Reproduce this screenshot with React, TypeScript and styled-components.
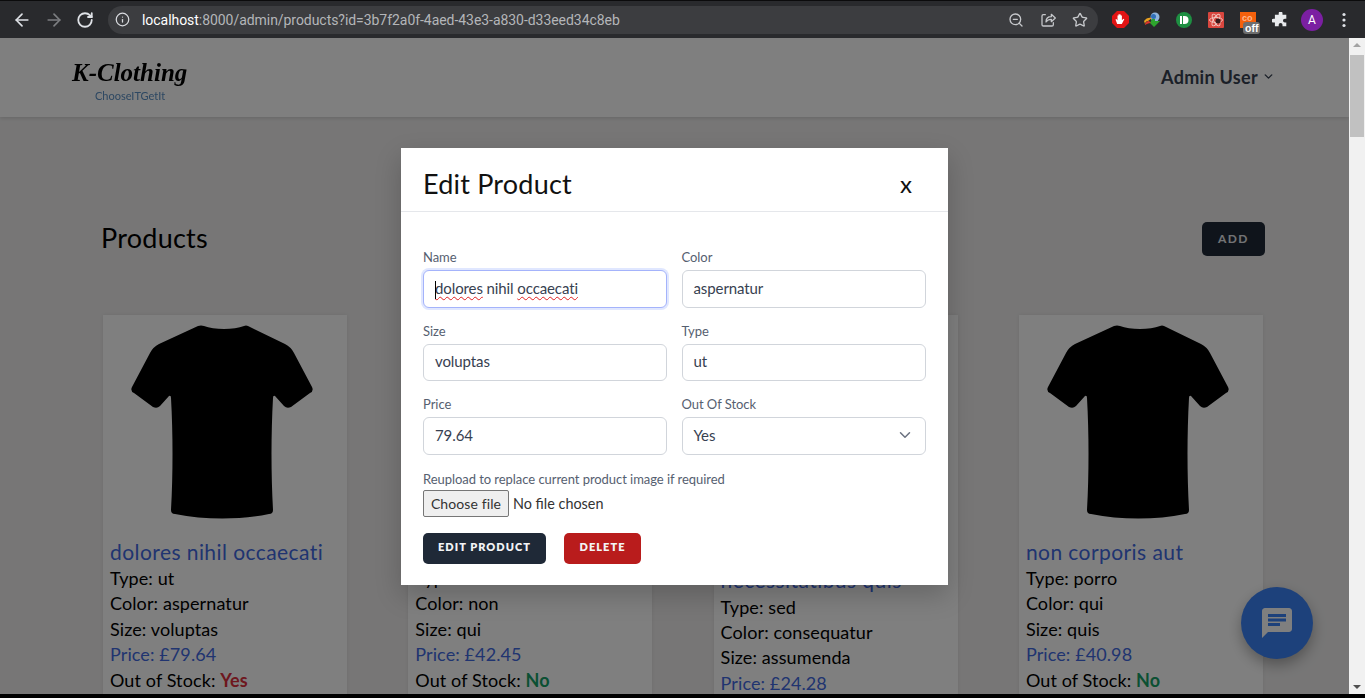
import React from "react";
import styled, { createGlobalStyle } from "styled-components";
import { ArrowLeft, ArrowRight, RotateCw, Info, ZoomOut, Star, ChevronDown } from "lucide-react";

const Global = createGlobalStyle`
  html, body { margin: 0; padding: 0; height: 100%; overflow: hidden; }
  body { font-family: Lato, "Liberation Sans", sans-serif; background: #000; }
  * { box-sizing: border-box; }
`;

const Shell = styled.div`
  height: 698px; display: flex; flex-direction: column; overflow: hidden; background: #000;
`;
const Toolbar = styled.div`
  height: 38px; flex: none; background: #292a2d; border-top: 1px solid #0b0b0c;
  display: flex; align-items: center; padding: 0 0 0 12px; color: #dee1e6;
`;
const NavGroup = styled.div`
  display: flex; gap: 12px; align-items: center; width: 96px; flex: none;
`;
const Omnibox = styled.div`
  width: 990px; flex: none; height: 28px; border-radius: 14px; background: #3c3d40;
  display: flex; align-items: center; padding: 0 10px 0 7px; gap: 12px;
`;
const Url = styled.div`
  flex: 1; font: 14px "Roboto", "Liberation Sans", sans-serif; letter-spacing: -.05px; color: #b4b6b9; white-space: nowrap;
  b { color: #fff; font-weight: 400; }
`;
const OmniActions = styled.div`
  display: flex; gap: 16px; align-items: center; color: #c6c8cb;
`;
const Exts = styled.div`
  display: flex; align-items: center; margin-left: 6px; gap: 0;
`;
const ExtSlot = styled.div`
  width: 32px; height: 24px; display: flex; align-items: center; justify-content: center; position: relative; flex: none;
`;
const OffBadge = styled.span`
  position: absolute; left: 11px; top: 14px; background: #6e6e6e; color: #fff; border-radius: 3px;
  font: 700 10.5px/12px "Liberation Sans", sans-serif; padding: 0 2px;
`;
const CoMark = styled.text`
  font: 700 9px "Liberation Sans", sans-serif; fill: #ffb78c;
`;
const Avatar = styled.div`
  width: 22px; height: 22px; border-radius: 50%; background: #7b1fa2; color: #fff;
  font: 12px/22px "Roboto", sans-serif; text-align: center;
`;
const Viewport = styled.div`
  height: 656px; flex: none; display: flex; position: relative; overflow: hidden;
`;
const Page = styled.div`
  width: 1349px; flex: none; background: #eeeded; position: relative; overflow: hidden;
`;
const Header = styled.header`
  height: 79px; background: #fff; box-shadow: 0 1px 4px rgba(0,0,0,.15);
  display: flex; align-items: center; justify-content: space-between; padding: 0 74px 0 72px;
`;
const Logo = styled.div`
  display: flex; flex-direction: column; width: 114px; margin-top: 5px; filter: blur(.35px);
`;
const LogoMark = styled.div`
  font: italic 700 25px/30px "Liberation Serif", serif; letter-spacing: 0; color: #000; white-space: nowrap;
`;
const LogoTag = styled.div`
  font: 11px/12px Lato, sans-serif; color: #5b8fc4; margin: 2px 0 0 23px;
`;
const UserMenu = styled.div`
  display: flex; align-items: center; gap: 4px; font-size: 18px; font-weight: 700; color: #374151;
  letter-spacing: .3px; margin-top: -2px;
`;
const TitleRow = styled.div`
  display: flex; justify-content: space-between; align-items: flex-start;
  padding: 104px 84px 0 101px; height: 160px;
`;
const PageTitle = styled.h1`
  margin: 0; font-size: 27px; line-height: 33px; font-weight: 400; color: #000; letter-spacing: .25px;
`;
const AddButton = styled.button`
  width: 63px; height: 34px; border: 0; border-radius: 5px; background: #1f2937; color: #e5e7eb;
  font: 700 12px Lato, sans-serif; letter-spacing: 1.4px; margin-top: 1px; padding: 0 0 2px;
`;
const Grid = styled.div`
  display: grid; grid-template-columns: repeat(4, 244px); column-gap: 61.3px; padding: 38px 0 0 103px; align-items: start;
`;
const Card = styled.article`
  background: #fff; box-shadow: 0 0 4px rgba(0,0,0,.08); padding: 9px 7px 0; height: 430px;
`;
const ShirtBox = styled.div`
  height: 195px; margin: 0 0 18.5px 20px;
`;
const CardTitle = styled.div`
  font-size: 21px; line-height: 28.5px; color: #4169e1; letter-spacing: .43px;
`;
const Line = styled.div<{ $blue?: boolean }>`
  font-size: 18px; line-height: 25.4px; color: ${p => (p.$blue ? "#4169e1" : "#000")}; letter-spacing: .1px;
`;
const Stock = styled.b<{ $no?: boolean }>`
  color: ${p => (p.$no ? "#16a066" : "#dc2f3c")}; font-weight: 700;
`;
const Backdrop = styled.div`
  position: absolute; inset: 0; background: rgba(0,0,0,.5);
`;
const Modal = styled.div`
  position: absolute; left: 401px; top: 110px; width: 547px; height: 437px; background: #fff;
  box-shadow: 0 10px 25px rgba(0,0,0,.2); color: #000;
`;
const ModalHead = styled.div`
  height: 64px; border-bottom: 1px solid #e5e7eb; padding: 7px 36px 0 22px;
  display: flex; justify-content: space-between; align-items: center;
`;
const ModalTitle = styled.h2`
  margin: 0; font-size: 27px; font-weight: 400; letter-spacing: .2px; color: #111;
`;
const CloseX = styled.span`
  font-size: 24px; line-height: 24px; color: #111; margin-top: 2px;
`;
const Form = styled.div`
  padding: 36px 22px 0;
`;
const FieldGrid = styled.div`
  display: grid; grid-template-columns: 244px 244.5px; column-gap: 14.5px; row-gap: 14.2px;
`;
const FieldWrap = styled.div``;
const Label = styled.div`
  font-size: 13px; line-height: 18px; color: #566070; letter-spacing: -.05px; margin-bottom: 4px;
`;
const Field = styled.div<{ $focus?: boolean }>`
  height: 37.5px; border: 1px solid ${p => (p.$focus ? "#a4b3fb" : "#d1d5db")}; border-radius: 6px; background: #fff;
  padding: 0 11px 2px; display: flex; align-items: center; justify-content: space-between;
  font-size: 15px; color: #374151; letter-spacing: -.1px; position: relative;
  ${p => p.$focus && "box-shadow: 0 0 0 2px #e0e7ff;"}
`;
const Caret = styled.i`
  position: absolute; left: 11px; top: 10px; height: 18px; width: 1px; background: #000;
`;
const Misspelt = styled.span`
  text-decoration: underline wavy #e02020 1px; text-underline-offset: 2px;
`;
const FileLabel = styled(Label)`
  margin: 15px 0 2.5px;
`;
const FileRow = styled.div`
  display: flex; align-items: center; gap: 4px; height: 27px;
`;
const FileButton = styled.button`
  width: 86px; height: 27px; padding: 0 0 1px; background: #efefef; border: 1px solid #767676; border-radius: 2px;
  font: 14px Lato, sans-serif; letter-spacing: .1px; color: #333;
`;
const FileHint = styled.span`
  font-size: 14.4px; color: #333;
`;
const Actions = styled.div`
  display: flex; gap: 18px; margin-top: 15.5px;
`;
const ActionBtn = styled.button<{ $danger?: boolean }>`
  height: 31px; width: ${p => (p.$danger ? "77px" : "123px")}; border: 0; border-radius: 5px; padding: 0 0 3px;
  background: ${p => (p.$danger ? "#b91c1c" : "#1f2937")}; color: #f3f4f6;
  font: 800 11px Lato, sans-serif; letter-spacing: 1.05px;
`;
const ChatFab = styled.div`
  position: absolute; left: 1241px; top: 549px; width: 72px; height: 72px; border-radius: 50%;
  background: #3b82f6; box-shadow: 0 6px 14px rgba(0,0,0,.3);
  display: flex; align-items: center; justify-content: center;
`;
const Scrollbar = styled.div`
  width: 16px; flex: none; background: #f1f1f1; display: flex; flex-direction: column; align-items: center; justify-content: space-between; padding: 5px 0; position: relative;
`;
const Thumb = styled.div`
  position: absolute; left: 1px; right: 1px; top: 17px; height: 82px; background: #c1c1c1;
`;
const Arrow = styled.div<{ $down?: boolean }>`
  width: 0; height: 0; border-left: 4px solid transparent; border-right: 4px solid transparent;
  ${p => (p.$down ? "border-top: 4px solid #505050;" : "border-bottom: 4px solid #a3a3a3;")}
`;

const Shirt = () => (
  <svg width="184" height="196" viewBox="0 0 184 196" fill="#000">
    <path d="M74 2 C 84 6 104 6 114 2 Q 116 1 118 2 L 155 20 Q 161 23 164 29 L 182 63 Q 184 67 180 69 L 161 83 Q 157 85 154 82 L 145 72 Q 143 71 143 74 C 141 110 141 150 143 186 Q 143 190 139 190 C 110 196 75 196 45 190 Q 41 190 41 186 C 43 150 43 110 41 74 Q 41 71 39 72 L 30 82 Q 27 85 23 83 L 4 69 Q 0 67 2 63 L 20 29 Q 23 23 29 20 L 68 2 Q 71 1 74 2 Z" />
  </svg>
);

const ShareIcon = () => (
  <svg width="16" height="16" viewBox="0 0 24 24" fill="none" stroke="currentColor" strokeWidth="1.9" strokeLinejoin="round" strokeLinecap="round">
    <path d="M8 4H5a2 2 0 0 0-2 2v13a2 2 0 0 0 2 2h13a2 2 0 0 0 2-2v-3" />
    <path d="M9 15c0-5 3.500-8 8-8V3.500L23 9l-6 5.500V11c-3.500 0-6 1-8 4z" />
  </svg>
);

const cards = [
  { t: "dolores nihil occaecati", type: "ut", color: "aspernatur", size: "voluptas", price: "79.64", no: false },
  { t: "sit et dolorem", type: "ut", color: "non", size: "qui", price: "42.45", no: true },
  { t: "aut ipsam repellat necessitatibus quis", type: "sed", color: "consequatur", size: "assumenda", price: "24.28", no: true },
  { t: "non corporis aut", type: "porro", color: "qui", size: "quis", price: "40.98", no: true },
];

export default function App() {
  return (
    <Shell>
      <Global />
      <Toolbar>
        <NavGroup>
          <ArrowLeft size={20} strokeWidth={2} />
          <ArrowRight size={20} strokeWidth={2} color="#7c7e81" />
          <RotateCw size={18} strokeWidth={2.4} />
        </NavGroup>
        <Omnibox>
          <Info size={15} color="#dadce0" />
          <Url><b>localhost</b>:8000/admin/products?id=3b7f2a0f-4aed-43e3-a830-d33eed34c8eb</Url>
          <OmniActions>
            <ZoomOut size={16} />
            <ShareIcon />
            <Star size={16} />
          </OmniActions>
        </Omnibox>
        <Exts>
          <ExtSlot>
            <svg width="17" height="17" viewBox="0 0 17 17"><path d="M5 0h7l5 5v7l-5 5H5l-5-5V5z" fill="#e11414" /><path d="M5.200 13 3.500 8.500l1-.5 1 1.500V4.500h1V8V3.300h1.200V8V3.500h1.100V8V4.500h1.100v4.700l1.500-1.500.9.600L9.800 13z" fill="#fff" /></svg>
          </ExtSlot>
          <ExtSlot>
            <svg width="19" height="16" viewBox="0 0 19 16"><circle cx="12" cy="5" r="4.500" fill="#8fb4dc" /><circle cx="10.500" cy="4.500" r="2.500" fill="#2f6fb8" /><path d="M9 7h3v2h5l-6 6-4-4z" fill="#2da52d" /><path d="M1 9c2-3 5-4 8-3L5 9c-2 0-3 2-3 3z" fill="#e8a020" /><path d="M2 12c1-2 2-3 4-3l2 2c-3 0-4 1-6 2z" fill="#d9342b" /></svg>
          </ExtSlot>
          <ExtSlot>
            <svg width="16" height="16" viewBox="0 0 16 16"><circle cx="8" cy="8" r="8" fill="#1e8f42" /><rect x="4" y="4" width="2" height="8" fill="#fff" /><path d="M7 4h1.500a4 4 0 0 1 0 8H7z" fill="#fff" /></svg>
          </ExtSlot>
          <ExtSlot>
            <svg width="16" height="16" viewBox="0 0 16 16"><rect width="16" height="16" rx="1" fill="#d9463e" /><g fill="none" stroke="#f3c9c3" strokeWidth=".9"><ellipse cx="8" cy="8" rx="6.500" ry="2.500" /><ellipse cx="8" cy="8" rx="6.500" ry="2.500" transform="rotate(60 8 8)" /><ellipse cx="8" cy="8" rx="6.500" ry="2.500" transform="rotate(120 8 8)" /></g><circle cx="10" cy="9" r="2.500" fill="#3a1a1a" /></svg>
          </ExtSlot>
          <ExtSlot>
            <svg width="16" height="16" viewBox="0 0 16 16"><rect width="16" height="16" fill="#f4600c" /><CoMark x="2" y="9">co</CoMark></svg>
            <OffBadge>off</OffBadge>
          </ExtSlot>
          <ExtSlot>
            <svg width="16" height="16" viewBox="0 0 16 16" fill="#e8eaed"><path d="M6 1.500a2 2 0 0 1 4 0V3h4v4h-1.500a2 2 0 0 0 0 4H14v4h-4v-1.500a2 2 0 0 0-4 0V15H2v-4H.500a2 2 0 0 1 0-4H2V3h4z" transform="translate(1 0) scale(.95)" /></svg>
          </ExtSlot>
          <ExtSlot><Avatar>A</Avatar></ExtSlot>
          <ExtSlot>
            <svg width="4" height="16" viewBox="0 0 4 16" fill="#dee1e6"><circle cx="2" cy="2.500" r="1.600" /><circle cx="2" cy="8" r="1.600" /><circle cx="2" cy="13.500" r="1.600" /></svg>
          </ExtSlot>
        </Exts>
      </Toolbar>
      <Viewport>
        <Page>
          <Header>
            <Logo>
              <LogoMark>K-Clothing</LogoMark>
              <LogoTag>ChooseITGetIt</LogoTag>
            </Logo>
            <UserMenu>Admin User <ChevronDown size={13} strokeWidth={2.6} /></UserMenu>
          </Header>
          <TitleRow>
            <PageTitle>Products</PageTitle>
            <AddButton>ADD</AddButton>
          </TitleRow>
          <Grid>
            {cards.map(c => (
              <Card key={c.t}>
                <ShirtBox><Shirt /></ShirtBox>
                <CardTitle>{c.t}</CardTitle>
                <Line>Type: {c.type}</Line>
                <Line>Color: {c.color}</Line>
                <Line>Size: {c.size}</Line>
                <Line $blue>Price: £{c.price}</Line>
                <Line>Out of Stock: <Stock $no={c.no}>{c.no ? "No" : "Yes"}</Stock></Line>
              </Card>
            ))}
          </Grid>
          <ChatFab>
            <svg width="36" height="36" viewBox="0 0 24 24" fill="#fff"><path d="M20 2H4c-1.100 0-2 .9-2 2v18l4-4h14c1.100 0 2-.9 2-2V4c0-1.100-.9-2-2-2zM6 9h12v2H6zm8 5H6v-2h8zm4-6H6V6h12z" /></svg>
          </ChatFab>
          <Backdrop />
          <Modal>
            <ModalHead>
              <ModalTitle>Edit Product</ModalTitle>
              <CloseX>x</CloseX>
            </ModalHead>
            <Form>
              <FieldGrid>
                <FieldWrap>
                  <Label>Name</Label>
                  <Field $focus><Caret /><span><Misspelt>dolores</Misspelt> nihil <Misspelt>occaecati</Misspelt></span></Field>
                </FieldWrap>
                <FieldWrap><Label>Color</Label><Field>aspernatur</Field></FieldWrap>
                <FieldWrap><Label>Size</Label><Field>voluptas</Field></FieldWrap>
                <FieldWrap><Label>Type</Label><Field>ut</Field></FieldWrap>
                <FieldWrap><Label>Price</Label><Field>79.64</Field></FieldWrap>
                <FieldWrap>
                  <Label>Out Of Stock</Label>
                  <Field>Yes <ChevronDown size={18} color="#6b7280" /></Field>
                </FieldWrap>
              </FieldGrid>
              <FileLabel>Reupload to replace current product image if required</FileLabel>
              <FileRow>
                <FileButton>Choose file</FileButton>
                <FileHint>No file chosen</FileHint>
              </FileRow>
              <Actions>
                <ActionBtn>EDIT PRODUCT</ActionBtn>
                <ActionBtn $danger>DELETE</ActionBtn>
              </Actions>
            </Form>
          </Modal>
        </Page>
        <Scrollbar>
          <Arrow />
          <Thumb />
          <Arrow $down />
        </Scrollbar>
      </Viewport>
    </Shell>
  );
}
